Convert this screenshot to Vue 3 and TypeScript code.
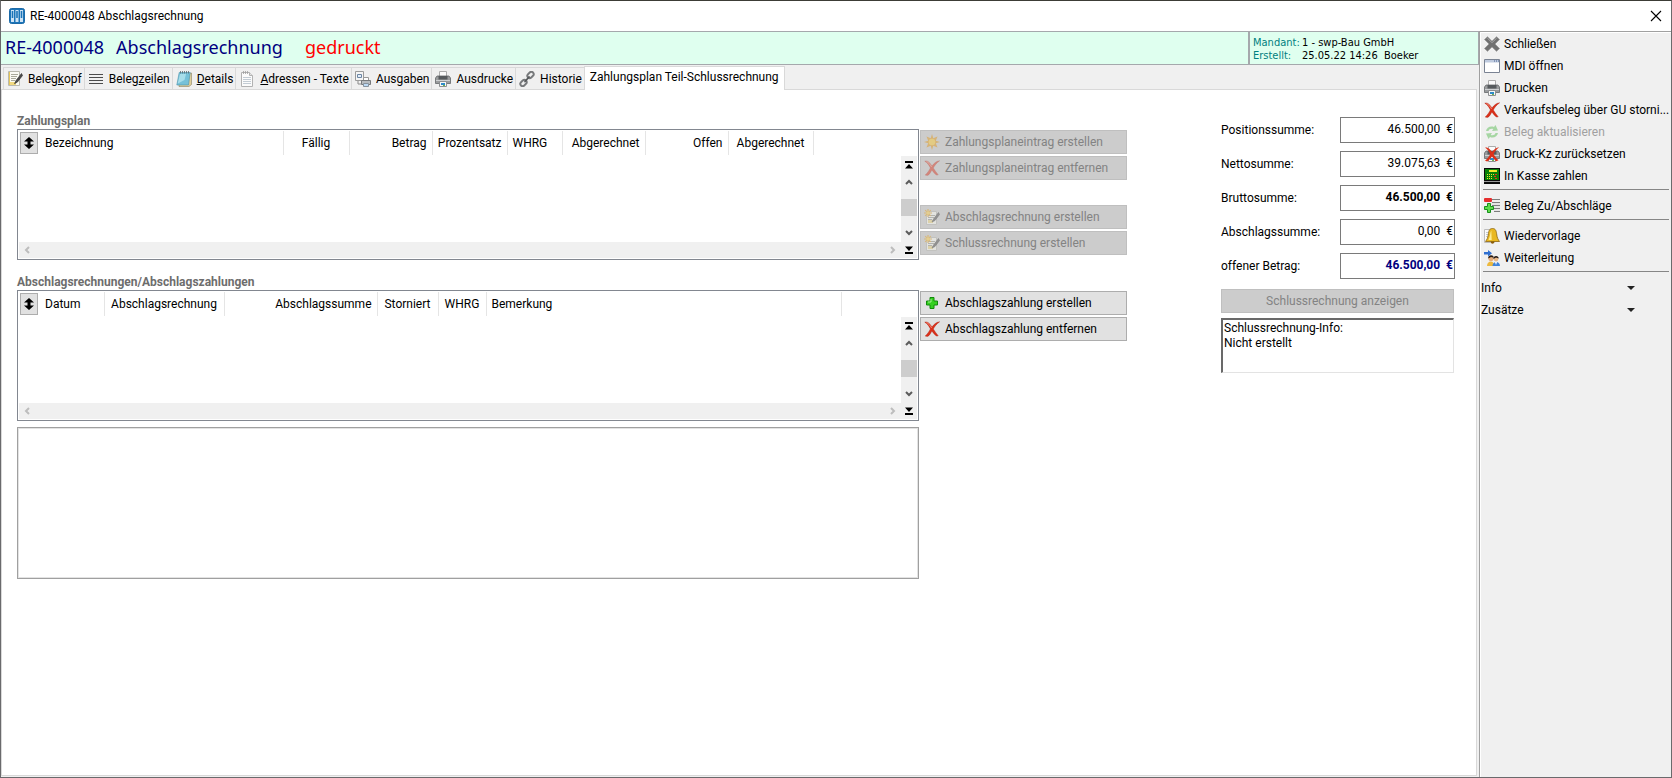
<script setup lang="ts">
interface Tab { id: string; icon: string; pre: string; key: string; post: string }
interface Column { label: string; width: number; align: 'left' | 'center' | 'right' }
interface List { id: string; title: string; columns: Column[] }
interface Action { icon: string; label: string; disabled: boolean }
interface Amount { id: string; label: string; value: string; tone: string }

const tabs: Tab[] = [
  { id: 'kopf', icon: 'edit', pre: 'Beleg', key: 'k', post: 'opf' },
  { id: 'zeilen', icon: 'lines', pre: 'Beleg', key: 'z', post: 'eilen' },
  { id: 'details', icon: 'pad', pre: '', key: 'D', post: 'etails' },
  { id: 'adressen', icon: 'note', pre: '', key: 'A', post: 'dressen - Texte' },
  { id: 'ausgaben', icon: 'output', pre: 'Ausgaben', key: '', post: '' },
  { id: 'ausdrucke', icon: 'printer', pre: 'Ausdrucke', key: '', post: '' },
  { id: 'historie', icon: 'chain', pre: 'Historie', key: '', post: '' },
]

const plan: List = {
  id: 'plan',
  title: 'Zahlungsplan',
  columns: [
    { label: 'Bezeichnung', width: 243, align: 'left' },
    { label: 'Fällig', width: 66, align: 'center' },
    { label: 'Betrag', width: 83, align: 'right' },
    { label: 'Prozentsatz', width: 75, align: 'right' },
    { label: 'WHRG', width: 55, align: 'left' },
    { label: 'Abgerechnet', width: 83, align: 'right' },
    { label: 'Offen', width: 83, align: 'right' },
    { label: 'Abgerechnet', width: 85, align: 'center' },
  ],
}

const payments: List = {
  id: 'payments',
  title: 'Abschlagsrechnungen/Abschlagszahlungen',
  columns: [
    { label: 'Datum', width: 64, align: 'left' },
    { label: 'Abschlagsrechnung', width: 120, align: 'center' },
    { label: 'Abschlagssumme', width: 153, align: 'right' },
    { label: 'Storniert', width: 61, align: 'center' },
    { label: 'WHRG', width: 48, align: 'center' },
    { label: 'Bemerkung', width: 355, align: 'left' },
  ],
}

const sections: { list: List; groups: Action[][] }[] = [
  {
    list: plan,
    groups: [
      [
        { icon: 'star', label: 'Zahlungsplaneintrag erstellen', disabled: true },
        { icon: 'cross', label: 'Zahlungsplaneintrag entfernen', disabled: true },
      ],
      [
        { icon: 'newdoc', label: 'Abschlagsrechnung erstellen', disabled: true },
        { icon: 'newdoc', label: 'Schlussrechnung erstellen', disabled: true },
      ],
    ],
  },
  {
    list: payments,
    groups: [
      [
        { icon: 'plus', label: 'Abschlagszahlung erstellen', disabled: false },
        { icon: 'cross', label: 'Abschlagszahlung entfernen', disabled: false },
      ],
    ],
  },
]

const amounts: Amount[] = [
  { id: 'pos', label: 'Positionssumme:', value: '46.500,00\u00a0\u00a0€', tone: '' },
  { id: 'net', label: 'Nettosumme:', value: '39.075,63\u00a0\u00a0€', tone: '' },
  { id: 'gross', label: 'Bruttosumme:', value: '46.500,00\u00a0\u00a0€', tone: 'strong' },
  { id: 'part', label: 'Abschlagssumme:', value: '0,00\u00a0\u00a0€', tone: '' },
  { id: 'open', label: 'offener Betrag:', value: '46.500,00\u00a0\u00a0€', tone: 'strong open' },
]

const menu: Action[][] = [
  [
    { icon: 'close', label: 'Schließen', disabled: false },
    { icon: 'window', label: 'MDI öffnen', disabled: false },
    { icon: 'printer', label: 'Drucken', disabled: false },
    { icon: 'cross', label: 'Verkaufsbeleg über GU storni...', disabled: false },
    { icon: 'refresh', label: 'Beleg aktualisieren', disabled: true },
    { icon: 'noprint', label: 'Druck-Kz zurücksetzen', disabled: false },
    { icon: 'register', label: 'In Kasse zahlen', disabled: false },
  ],
  [{ icon: 'addlines', label: 'Beleg Zu/Abschläge', disabled: false }],
  [
    { icon: 'bell', label: 'Wiedervorlage', disabled: false },
    { icon: 'forward', label: 'Weiterleitung', disabled: false },
  ],
]

const expanders = ['Info', 'Zusätze']
const info = 'Schlussrechnung-Info:\nNicht erstellt'
</script>

<template>
  <div class="window">
    <svg class="defs" aria-hidden="true">
      <symbol id="i-edit" viewBox="0 0 16 16">
        <path d="M1.500.500h11v14h-11z" fill="#fbfbf4" stroke="#b9b9ae" />
        <path d="M4 3.500h7M4 5.500h6M4 7.500h5M4 9.500h4" stroke="#a9a99a" />
        <path d="M2.500 1v13" stroke="#e6c65a" stroke-width="1" />
        <path d="M3 11h6v3H3z" fill="#f1d980" />
        <path d="M14.500 2.500 9 9.500l-1.500 3.200L10.500 11l5-6.500z" fill="#4b4b4b" stroke="#2a2a2a" stroke-width=".6" />
      </symbol>
      <symbol id="i-newdoc" viewBox="0 0 16 16">
        <path d="M2.500 2.500h10v13h-10z" fill="#fffff8" stroke="#b6b6b0" />
        <path d="M4 6.500h7M4 8.500h6M4 10.500h4" stroke="#94948a" />
        <path d="M4 11h5v3H4z" fill="#f1d980" />
        <path d="M14.500 3.500 9.500 10l-1.500 3 3-1.500 4.500-6z" fill="#4b4b4b" stroke="#2a2a2a" stroke-width=".6" />
        <path d="M4 0v8M0 4h8M1.200 1.200l5.600 5.600M6.800 1.200 1.200 6.800" stroke="#e8a21c" stroke-width="1.200" />
        <circle cx="4" cy="4" r="1.800" fill="#ffd24a" />
      </symbol>
      <symbol id="i-lines" viewBox="0 0 16 16">
        <path d="M1 3.500h14M1 6.500h14M1 9.500h14M1 12.500h14" stroke="#4c4c4c" />
      </symbol>
      <symbol id="i-pad" viewBox="0 0 16 16">
        <path d="M13 2.500 15.500 2v11.500l-2.500 2H3V14z" fill="#e0cf9a" stroke="#8a8060" stroke-width=".6" />
        <path d="M3.200 1.500h11L12.500 14H.800z" fill="#76c1d8" stroke="#4d94ac" stroke-width=".6" />
        <path d="M4 3h6L8.500 9 1.800 12.500z" fill="#a8deea" />
        <path d="M4.500 0v2.500M6.500 0v2.500M8.500 0v2.500M10.500 0v2.500M12.500 0v2.500" stroke="#5b6870" stroke-width=".8" />
      </symbol>
      <symbol id="i-note" viewBox="0 0 16 16">
        <path d="M2.500 1.500h8l3 3v11h-11z" fill="#fbfbfb" stroke="#b2b2b2" />
        <path d="M4 6.500h8M4 8.500h8M4 10.500h8M4 12.500h8" stroke="#c3ccd4" />
        <path d="M4.500 0v3M6.500 0v3M8.500 0v3" stroke="#a0a0a0" stroke-width=".8" />
        <path d="M10.500 1.500v3h3" fill="#e3e3e3" stroke="#b2b2b2" />
      </symbol>
      <symbol id="i-output" viewBox="0 0 16 16">
        <path d="M.5.500h8v9h-8z" fill="#f5f5f5" stroke="#9b9b9b" />
        <path d="M2.500 3.500h4v3h-4z" fill="#e5effa" stroke="#6c86a4" />
        <path d="M3 10v3h3" fill="none" stroke="#8b8b8b" />
        <path d="M8.500 6.500h5v3h-5z" fill="#fff" stroke="#999" />
        <path d="M6.500 9.500h9v4h-9z" fill="#b8bcc0" stroke="#76797c" />
        <path d="M8.500 12.500h5v3h-5z" fill="#bcd9f4" stroke="#87939e" />
      </symbol>
      <symbol id="i-printer" viewBox="0 0 16 16">
        <path d="M4.500.500h7v6h-7z" fill="#fbfbfb" stroke="#acacac" />
        <path d="M2 5h12l1.500 2v5.500h-15V7z" fill="#9a9c9e" stroke="#65686a" stroke-width=".8" />
        <path d="M3.500 5h9v3.500h-9z" fill="#565a5d" />
        <path d="M1 9.500h14" stroke="#cfd1d3" />
        <path d="M4.500 10.500h7v5h-7z" fill="#f7f7f7" stroke="#8d8f91" />
        <path d="M6 12h4v2H6z" fill="#2e8bc9" />
        <path d="M8 14h2v1H8z" fill="#6db34a" />
      </symbol>
      <symbol id="i-chain" viewBox="0 0 16 16">
        <g fill="none" stroke="#77797b" stroke-width="1.900">
          <rect x="8" y="1.700" width="7" height="4.600" rx="2.300" transform="rotate(-45 11.500 4)" />
          <rect x="1" y="9.700" width="7" height="4.600" rx="2.300" transform="rotate(-45 4.500 12)" />
        </g>
        <path d="M6 10.500 10 6" stroke="#55585a" stroke-width="1.700" stroke-linecap="round" />
      </symbol>
      <symbol id="i-star" viewBox="0 0 16 16">
        <path d="M8 0l1.300 4.200L13.500 2.500l-1.700 4.200L16 8l-4.200 1.300 1.700 4.200-4.200-1.700L8 16l-1.300-4.200-4.200 1.700 1.700-4.200L0 8l4.200-1.300L2.500 2.500l4.200 1.700z" fill="#e39612" />
        <circle cx="8" cy="8" r="3.300" fill="#ffca2d" />
      </symbol>
      <symbol id="i-cross" viewBox="0 0 16 16">
        <path d="M.8 1.200C4 .200 6 3 8 6c2-2.800 4.200-4.800 7.600-5.200C12.500 3 10.800 5.200 9.300 8c1.600 2.400 3 4.600 4.900 6.800l-1.800.300C10.500 13.500 9.200 11.800 7.900 9.900 6.500 12.500 5.500 14.500 3.500 15.600L1.200 15C3.500 13 5 10.600 6.400 7.900 5 5 3.200 2.600.800 1.200z" fill="#dc3019" stroke="#a81d0c" stroke-width=".4" />
        <path d="M2.500 1.700C4.500 2 6 4.500 7.600 7" fill="none" stroke="#f49483" stroke-width=".9" />
      </symbol>
      <symbol id="i-plus" viewBox="0 0 16 16">
        <path d="M6 2.500h4V6h3.500v4H10v3.500H6V10H2.500V6H6z" fill="#35cf20" stroke="#128a0b" stroke-linejoin="round" />
        <path d="M7 4v3H4" fill="none" stroke="#a2f38e" />
      </symbol>
      <symbol id="i-close" viewBox="0 0 16 16">
        <path d="M3.500.8 8 5.200 12.500.800 15.500 3.500 11 8l4.500 4.500-3 2.800L8 10.900l-4.500 4.400-3-2.800L5 8 .5 3.500z" fill="#717171" stroke="#989898" stroke-width=".8" stroke-linejoin="round" />
        <path d="M3.500 2.300 8 6.800l4.500-4.500" fill="none" stroke="#a3a3a3" />
      </symbol>
      <symbol id="i-window" viewBox="0 0 16 16">
        <path d="M.5 1.500h15v13H.5z" fill="#fff" stroke="#7a8393" />
        <path d="M1 2h14v2.500H1z" fill="#bfcbdf" />
        <path d="M10 3h1M12 3h1M14 3h1" stroke="#47618f" />
      </symbol>
      <symbol id="i-refresh" viewBox="0 0 16 16">
        <path d="M2 7C2.500 3.500 6.500 1.500 10 3L11.500 1l2.500 5.500-6 .500L9.300 5C7 4.500 5 5 4.500 7z" fill="#4db848" />
        <path d="M14 9c-.5 3.500-4.500 5.500-8 4L4.500 15 2 9.500 8 9l-1.300 2c2.300.500 4.300 0 4.800-2z" fill="#4db848" />
      </symbol>
      <symbol id="i-noprint" viewBox="0 0 16 16">
        <use href="#i-printer" />
        <path d="M1 1.500C4.500 1 6.500 4 8 6c2-2.600 4.200-4.500 7.200-4.800C12.500 3.300 10.800 5.400 9.500 8c1.400 2.300 2.800 4.200 5 6.300l-2.300.900C10.300 13.500 9 11.900 7.900 10.200 6.500 12.700 5.200 14.200 3.300 15.400L1 14.700C3.300 12.800 5 10.600 6.200 7.900 5 5 3.200 3 1 1.500z" fill="#dc3019" />
      </symbol>
      <symbol id="i-register" viewBox="0 0 16 16">
        <path d="M0 0h16v16H0z" fill="#0b0b0b" />
        <path d="M1 1h14v11H1z" fill="#078007" />
        <path d="M5 2h8v2H5z" fill="#f0ea2a" />
        <path d="M3 6h1v1H3zM5 6h1v1H5zM7 6h1v1H7zM9 6h1v1H9zM3 8h1v1H3zM5 8h1v1H5zM7 8h1v1H7zM3 10h1v1H3zM5 10h1v1H5zM7 10h1v1H7z" fill="#f0ea2a" />
        <path d="M11 6h2v1h-2zM10 8h2v1h-2zM11 10h2v1h-2z" fill="#ee2b1b" />
        <path d="M0 13.500h16" stroke="#9a9a9a" />
      </symbol>
      <symbol id="i-addlines" viewBox="0 0 16 16">
        <path d="M5 1.500h11M8 4.500h8M8 7.500h8M10 10.500h6M10 13.500h6" stroke="#7d7d7d" />
        <path d="M7 6h9M10 9h6M10 12h6" stroke="#dadada" />
        <rect x="0" y="0" width="8" height="4" rx="1" fill="#e62e2e" />
        <path d="M3.500 5.500h3v3h3v3h-3v3h-3v-3h-3v-3h3z" fill="#5fdc4b" stroke="#17911a" stroke-linejoin="round" />
      </symbol>
      <symbol id="i-bell" viewBox="0 0 16 16">
        <path d="M.5 1.500h10v13H.5z" fill="#fafafa" stroke="#bcbcbc" />
        <path d="M2 4.500h3M2 6.500h3M2 8.500h2" stroke="#c2c9d0" />
        <circle cx="8.500" cy="14" r="1.700" fill="#8a5b08" />
        <path d="M8.500.500c3.500 0 3.800 3 4.300 6.500.3 2.500 1.200 4.500 2.700 6.500h-14C3 11.500 3.900 9.500 4.200 7 4.700 3.500 5 .500 8.500.500z" fill="#e9b820" stroke="#8d650c" stroke-width=".8" />
        <path d="M7.300 2.500C6 4.500 6.300 8.500 4.500 12h3.200z" fill="#fdec93" />
      </symbol>
      <symbol id="i-forward" viewBox="0 0 16 16">
        <path d="M0 2h4V0l4 3.200L4 6.500v-2H0z" fill="#2f6fd0" />
        <circle cx="7" cy="8.500" r="2.600" fill="#e4ac7a" />
        <path d="M4.200 8.500c-.3-4 5.400-4.300 5.600-.800L7 7z" fill="#2b1d14" />
        <path d="M3 16c0-6 7.500-6 7.500 0z" fill="#edb93e" />
        <circle cx="12" cy="9" r="2.400" fill="#e9b888" />
        <path d="M9.400 9c-.3-4 5.300-4 5.400-.500L12 7.600z" fill="#1f1612" />
        <path d="M8.500 16c0-5.500 7.500-5.500 7.500 0z" fill="#3f83da" />
        <path d="M11 12h2l-1 3z" fill="#fff" />
      </symbol>
      <symbol id="i-sort" viewBox="0 0 10 12">
        <path d="M5 0l5 4.500H6.500v3H10L5 12 0 7.500h3.500v-3H0z" fill="#000" />
      </symbol>
      <symbol id="i-first" viewBox="0 0 8 8"><path d="M0 0h8v2H0zM4 3l4 4.500H0z" fill="#000" /></symbol>
      <symbol id="i-last" viewBox="0 0 8 8"><path d="M0 6h8v2H0zM4 5l4-4.500H0z" fill="#000" /></symbol>
      <symbol id="i-up" viewBox="0 0 8 8"><path d="M1 6l3-3 3 3" fill="none" stroke="#5c5c5c" stroke-width="2" /></symbol>
      <symbol id="i-down" viewBox="0 0 8 8"><path d="M1 2l3 3 3-3" fill="none" stroke="#5c5c5c" stroke-width="2" /></symbol>
      <symbol id="i-left" viewBox="0 0 8 8"><path d="M6 1L3 4l3 3" fill="none" stroke="#bdbdbd" stroke-width="2" /></symbol>
      <symbol id="i-right" viewBox="0 0 8 8"><path d="M2 1l3 3-3 3" fill="none" stroke="#bdbdbd" stroke-width="2" /></symbol>
    </svg>

    <header class="titlebar">
      <svg class="logo" viewBox="0 0 16 16" aria-hidden="true">
        <rect x=".5" y=".5" width="15" height="15" rx="2" fill="#1c75b8" stroke="#1c6aa8" />
        <path d="M2 2h3v12H2zM6.500 2h3v12h-3zM11 2h3v12h-3z" fill="#cfe4f5" />
        <path d="M3.500 3v7M8 3v7M12.500 3v7" stroke="#1c75b8" stroke-width="1.600" />
      </svg>
      <span class="caption">RE-4000048 Abschlagsrechnung</span>
      <button class="exit" type="button" aria-label="Fenster schließen">
        <svg viewBox="0 0 12 12"><path d="M1 1l10 10M11 1L1 11" stroke="#000" stroke-width="1.100" /></svg>
      </button>
    </header>

    <div class="body">
      <main class="main">
        <div class="banner">
          <h1 class="doc">
            <span>RE-4000048</span><span>Abschlagsrechnung</span><span class="state">gedruckt</span>
          </h1>
          <dl class="meta">
            <dt>Mandant:</dt><dd>1 - swp-Bau GmbH</dd>
            <dt>Erstellt:</dt><dd>25.05.22 14:26&nbsp; Boeker</dd>
          </dl>
        </div>

        <nav class="tabs" role="tablist">
          <button v-for="t in tabs" :key="t.id" class="tab" type="button" role="tab" aria-selected="false">
            <svg class="icon"><use :href="'#i-' + t.icon" /></svg>
            <span>{{ t.pre }}<u v-if="t.key">{{ t.key }}</u>{{ t.post }}</span>
          </button>
          <button class="tab active" type="button" role="tab" aria-selected="true">Zahlungsplan Teil-Schlussrechnung</button>
        </nav>

        <div class="page" role="tabpanel">
          <div class="lists">
            <section v-for="s in sections" :key="s.list.id" class="section">
              <h2 class="heading">{{ s.list.title }}</h2>
              <div class="listbox">
                <div class="gridhead">
                  <table class="table">
                    <thead>
                      <tr>
                        <th class="sortcell">
                          <button class="sort" type="button" aria-label="Sortierung"><svg><use href="#i-sort" /></svg></button>
                        </th>
                        <th v-for="(c, i) in s.list.columns" :key="i" scope="col" :class="c.align" :style="{ width: c.width + 'px' }">{{ c.label }}</th>
                        <th class="rest"></th>
                      </tr>
                    </thead>
                  </table>
                </div>
                <div class="vscroll">
                  <button type="button" aria-label="Erster"><svg><use href="#i-first" /></svg></button>
                  <button type="button" aria-label="Zurück"><svg><use href="#i-up" /></svg></button>
                  <span class="track"><span class="thumb"></span></span>
                  <button type="button" aria-label="Weiter"><svg><use href="#i-down" /></svg></button>
                  <button type="button" aria-label="Letzter"><svg><use href="#i-last" /></svg></button>
                </div>
                <div class="hscroll">
                  <button type="button" aria-label="Links" disabled><svg><use href="#i-left" /></svg></button>
                  <button type="button" aria-label="Rechts" disabled><svg><use href="#i-right" /></svg></button>
                </div>
              </div>
              <div class="actions">
                <div v-for="(g, gi) in s.groups" :key="gi" class="group">
                  <button v-for="a in g" :key="a.label" class="push" type="button" :disabled="a.disabled">
                    <svg class="icon"><use :href="'#i-' + a.icon" /></svg>{{ a.label }}
                  </button>
                </div>
              </div>
            </section>
            <textarea class="memo" aria-label="Bemerkung" readonly></textarea>
          </div>

          <form class="sums">
            <div v-for="a in amounts" :key="a.id" class="sum">
              <label :for="a.id">{{ a.label }}</label>
              <input :id="a.id" type="text" :class="a.tone" :value="a.value" readonly />
            </div>
            <div class="final">
              <button class="push show" type="button" disabled>Schlussrechnung anzeigen</button>
              <textarea class="info" aria-label="Schlussrechnung-Info" :value="info" readonly></textarea>
            </div>
          </form>
        </div>
      </main>

      <aside class="side">
        <div v-for="(g, gi) in menu" :key="gi" class="menugroup">
          <button v-for="m in g" :key="m.label" class="item" type="button" :disabled="m.disabled">
            <svg class="icon"><use :href="'#i-' + m.icon" /></svg>{{ m.label }}
          </button>
        </div>
        <button v-for="e in expanders" :key="e" class="expander" type="button">
          <span>{{ e }}</span><svg viewBox="0 0 8 4"><path d="M0 0h8L4 4z" fill="#222" /></svg>
        </button>
      </aside>
    </div>
  </div>
</template>

<style>
body { margin: 0; }
</style>

<style scoped>
.window, .window * { box-sizing: border-box; }
.window {
  display: flex;
  flex-direction: column;
  min-height: 100vh;
  border: 1px solid #6a6a6c;
  border-top-color: #3c3c36;
  background: #f0f0f0;
  color: #000;
  font: 12px/16px Roboto, "Noto Sans", sans-serif;
}
.window button, .window input, .window textarea { font: inherit; color: inherit; margin: 0; border-radius: 0; }
.window button { display: flex; align-items: center; padding: 0; border: 0; background: none; white-space: nowrap; }
.defs { display: none; }
.icon { width: 16px; height: 16px; flex: none; }

.titlebar { display: flex; align-items: center; height: 30px; padding: 0 9px 0 8px; background: #fff; }
.logo { width: 16px; height: 16px; }
.caption { flex: 1; margin-left: 5px; }
.exit svg { width: 12px; height: 12px; }

.body { display: flex; flex: 1; }
.main { display: flex; flex-direction: column; flex: 1; min-width: 0; }

.banner { display: flex; border: 1px solid #a5a8ac; border-left: 0; background: #dfffef; }
.doc {
  display: flex;
  flex: 1;
  align-items: center;
  gap: 12px;
  margin: 0;
  padding-left: 4px;
  color: #000080;
  font: 18px/32px "Noto Sans", "Open Sans", sans-serif;
}
.doc span { line-height: 30px; padding-bottom: 2px; }
.state { margin-left: 10px; color: #f00; }
.meta {
  display: grid;
  grid-template-columns: 49px 1fr;
  align-content: center;
  width: 230px;
  margin: 0;
  padding: 2px 0 0 3px;
  border-left: 2px solid #a5a8ac;
  font: 11px/13px "DejaVu Sans Condensed", "Noto Sans", sans-serif;
}
.meta dt { color: #008080; }
.meta dd { margin: 0; white-space: nowrap; }

.tabs { display: flex; align-items: flex-end; height: 24px; padding-left: 2px; }
.window .tab { height: 22px; gap: 5px; padding: 0 2px 0 3px; border: solid #d9d9d9; border-width: 1px 1px 0 0; }
.window .tab:first-child { border-left-width: 1px; }
.window .tab.active { height: 24px; margin: 0 0 -1px -1px; padding: 0 5px 3px; border-left-width: 1px; background: #fff; z-index: 1; }

.page {
  display: flex;
  flex: 1;
  align-items: flex-start;
  gap: 94px;
  margin: 0 2px 1px 0;
  padding: 24px 21px 24px 15px;
  border: 1px solid #d9d9d9;
  background: #fff;
}
.lists { flex: 1; min-width: 0; }
.section { display: grid; grid-template-columns: minmax(0, 1fr) 207px; column-gap: 1px; }
.section + .section { margin-top: 15px; }
.heading { grid-column: 1 / -1; margin: 0; color: #6d6d6d; font-size: 12px; line-height: 15px; font-weight: 700; }
.listbox {
  display: grid;
  grid-template: 25px 86px 16px / minmax(0, 1fr) 16px;
  padding: 1px;
  border: 1px solid #828790;
}
.gridhead { grid-column: 1 / -1; overflow: hidden; }
.table { width: 100%; border-collapse: collapse; table-layout: fixed; }
.table th { height: 24px; padding: 0 5px; border-right: 1px solid #e5e5e5; font-weight: 400; text-align: left; white-space: nowrap; }
.table .center { text-align: center; }
.table .right { text-align: right; }
.table .sortcell { width: 21px; padding: 0 1px; border-right: 0; }
.table .rest { border-right: 0; }
.sortcell .sort { width: 18px; height: 22px; justify-content: center; border: 1px solid #adadad; background: #e1e1e1; }
.sort svg { flex: none; width: 10px; height: 12px; }
.vscroll { grid-column: 2; grid-row: 2 / 4; display: flex; flex-direction: column; background: #f0f0f0; }
.vscroll button, .hscroll button { width: 16px; height: 17px; justify-content: center; }
.hscroll button { height: 16px; }
.vscroll svg, .hscroll svg { width: 8px; height: 8px; }
.track { flex: 1; padding-top: 9px; }
.thumb { display: block; height: 17px; background: #cdcdcd; }
.hscroll { grid-row: 3; display: flex; justify-content: space-between; background: #f0f0f0; }
.actions { display: flex; flex-direction: column; gap: 25px; padding-top: 1px; }
.group { display: grid; gap: 2px; }
.window .push { height: 24px; gap: 5px; padding: 0 3px; border: 1px solid #adadad; background: #e1e1e1; }
.window .push:disabled { border-color: #bfbfbf; background: #ccc; color: #838383; }
.push:disabled .icon { opacity: .45; }
.window .memo {
  display: block;
  width: calc(100% - 208px);
  height: 152px;
  margin-top: 6px;
  border: 1px solid #a0a0a0;
  outline: 0;
  box-shadow: inset 0 0 0 1px #e3e3e3;
  background: #fff;
  resize: none;
}

.sums { display: flex; flex-direction: column; gap: 8px; width: 234px; padding-top: 3px; }
.sum { display: flex; align-items: center; justify-content: space-between; }
.sum label { padding-bottom: 1px; }
.sum input { width: 115px; height: 26px; padding: 0 1px 3px; border: 1px solid #7a7a7a; outline: 0; background: #fff; text-align: right; }
.window .sum .strong { font-weight: 700; }
.window .sum .open { color: #000080; }
.final { display: grid; gap: 5px; padding: 2px 1px 0 0; }
.window .show { justify-content: center; }
.window .info {
  height: 55px;
  padding: 1px;
  border: solid;
  border-width: 2px 1px 1px 2px;
  border-color: #696969 #e3e3e3 #e3e3e3 #696969;
  outline: 0;
  background: #fff;
  line-height: 15px;
  resize: none;
}

.side { width: 192px; padding: 1px 2px 0 1px; border-left: 1px solid #a0a0a0; border-top: 1px solid #a0a0a0; box-shadow: inset 1px 1px #fff; }
.menugroup { margin: 0 0 5px 2px; padding-bottom: 2px; border-bottom: 1px solid #868686; }
.window .item { width: 100%; height: 22px; gap: 4px; padding-left: 1px; }
.window .item:disabled { color: #a0a0a0; }
.item:disabled .icon { opacity: .45; }
.window .expander { width: 154px; height: 22px; justify-content: space-between; }
.expander svg { width: 8px; height: 4px; }
</style>
